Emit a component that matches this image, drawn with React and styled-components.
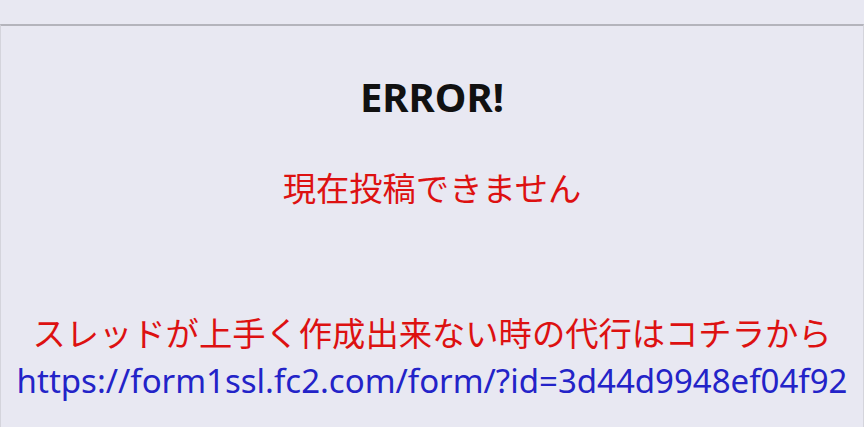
import React from 'react'
import styled, { createGlobalStyle } from 'styled-components'

const GlobalStyle = createGlobalStyle`
  html, body {
    margin: 0;
    padding: 0;
    background: #e8e8f2;
  }
  body {
    font-family: "Noto Sans", "Noto Sans CJK JP", sans-serif;
  }
`

const Page = styled.div`
  width: 864px;
  height: 427px;
  overflow: hidden;
  display: flex;
  flex-direction: column;
  background: #e8e8f2;
`

const Panel = styled.section`
  flex: 1;
  margin-top: 24px;
  border-top: 2px solid #b4b4bc;
  border-left: 1px solid #d4d4dc;
  border-right: 1px solid #d4d4dc;
  display: flex;
  flex-direction: column;
  align-items: center;
  text-align: center;
`

const Title = styled.h1`
  margin: 47px 0 0;
  font-size: 40px;
  font-weight: 700;
  line-height: 48px;
  color: #111;
`

const Message = styled.p`
  margin: ${p => p.$top}px 0 0;
  font-size: 33.3px;
  line-height: 48px;
  color: #dd1111;
  white-space: nowrap;
`

const Link = styled.a`
  font-size: 33px;
  line-height: 48px;
  color: #2323c8;
  text-decoration: none;
  white-space: nowrap;
`

export default function App() {
  return (
    <Page>
      <GlobalStyle />
      <Panel>
        <Title>ERROR!</Title>
        <Message $top={43}>現在投稿できません</Message>
        <Message $top={97}>スレッドが上手く作成出来ない時の代行はコチラから</Message>
        <Link href="https://form1ssl.fc2.com/form/?id=3d44d9948ef04f92">
          https://form1ssl.fc2.com/form/?id=3d44d9948ef04f92
        </Link>
      </Panel>
    </Page>
  )
}
